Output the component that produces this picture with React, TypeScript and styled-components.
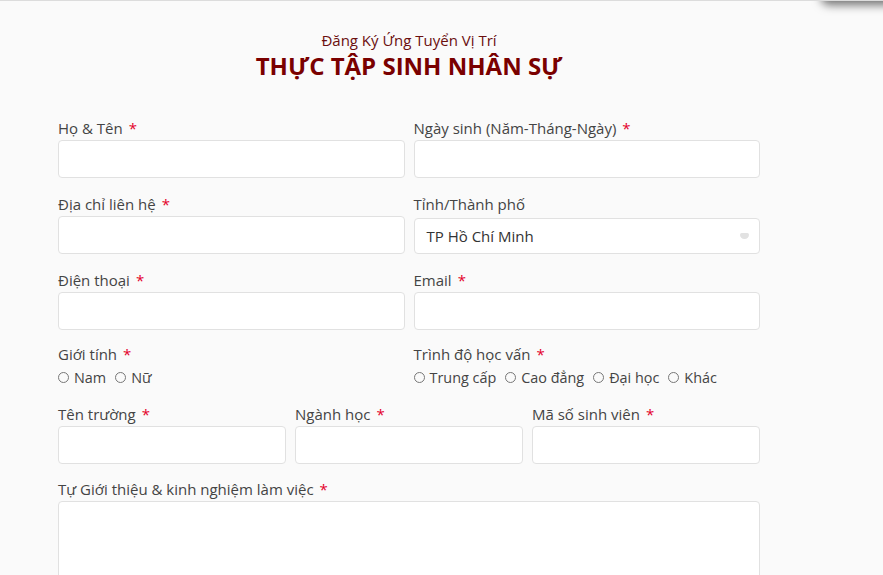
import React from 'react';
import styled, { createGlobalStyle } from 'styled-components';

const GlobalStyle = createGlobalStyle`
  html, body {
    margin: 0;
    padding: 0;
    background: #fafafa;
  }
  body {
    font-family: 'Open Sans', 'Noto Sans', sans-serif;
    color: #444;
    border-top: 1px solid #dcdcdc;
  }
`;

const Page = styled.div`
  position: relative;
  min-height: 574px;
  overflow: hidden;
`;

const CornerShadow = styled.div`
  position: absolute;
  top: -24px;
  right: -20px;
  width: 80px;
  height: 24px;
  border-radius: 6px;
  box-shadow: 0 2px 10px 2px rgba(0, 0, 0, 0.55);
`;

const Form = styled.form`
  width: 702px;
  margin-left: 58px;
  padding-top: 29px;
`;

const Header = styled.div`
  text-align: center;
  margin-bottom: 36px;
`;

const SubTitle = styled.div`
  font-size: 15px;
  line-height: 20px;
  color: #6b0f0f;
`;

const Title = styled.h1`
  margin: 0;
  font-size: 24px;
  line-height: 32px;
  font-weight: 700;
  color: #7a0000;
`;

const Row = styled.div<{ $cols: number; $space?: number }>`
  display: grid;
  grid-template-columns: repeat(${p => p.$cols}, 1fr);
  column-gap: 9px;
  margin-bottom: ${p => p.$space ?? 16}px;
`;

const Field = styled.div`
  display: flex;
  flex-direction: column;
`;

const Label = styled.label`
  font-size: 15px;
  line-height: 21px;
  color: #444;
  margin-bottom: 1px;
`;

const Required = styled.span`
  color: #e4002b;
  margin-left: 6px;
`;

const Input = styled.input`
  box-sizing: border-box;
  height: 38px;
  width: 100%;
  background: #fff;
  border: 1px solid #e1e1e1;
  border-radius: 4px;
  outline: none;
  font: inherit;
`;

const SelectBox = styled.div`
  box-sizing: border-box;
  height: 36px;
  margin-top: 2px;
  display: flex;
  align-items: center;
  justify-content: space-between;
  padding: 0 10px 0 12px;
  background: #fff;
  border: 1px solid #e1e1e1;
  border-radius: 4px;
  font-size: 15px;
  color: #333;
`;

const Caret = styled.span`
  width: 9px;
  height: 6px;
  background: #e2e2e2;
  border-radius: 2px 2px 5px 5px;
`;

const RadioGroup = styled.div`
  display: flex;
  align-items: center;
  gap: 9px;
  height: 22px;
  font-size: 14.4px;
  color: #444;
`;

const Option = styled.span`
  display: flex;
  align-items: center;
  gap: 5px;
`;

const Circle = styled.span`
  box-sizing: border-box;
  width: 11px;
  height: 11px;
  border: 1px solid #777;
  border-radius: 50%;
`;

const TextArea = styled.textarea`
  box-sizing: border-box;
  width: 100%;
  height: 120px;
  background: #fff;
  border: 1px solid #e1e1e1;
  border-radius: 4px;
  resize: none;
  outline: none;
`;

const FieldLabel: React.FC<{ text: string; required?: boolean }> = ({ text, required }) => (
  <Label>
    {text}
    {required && <Required>*</Required>}
  </Label>
);

const Radios: React.FC<{ items: string[] }> = ({ items }) => (
  <RadioGroup>
    {items.map(item => (
      <Option key={item}>
        <Circle />
        {item}
      </Option>
    ))}
  </RadioGroup>
);

const App: React.FC = () => {
  return (
    <Page>
      <GlobalStyle />
      <CornerShadow />
      <Form>
        <Header>
          <SubTitle>Đăng Ký Ứng Tuyển Vị Trí</SubTitle>
          <Title>THỰC TẬP SINH NHÂN SỰ</Title>
        </Header>

        <Row $cols={2}>
          <Field>
            <FieldLabel text="Họ & Tên" required />
            <Input />
          </Field>
          <Field>
            <FieldLabel text="Ngày sinh (Năm-Tháng-Ngày)" required />
            <Input />
          </Field>
        </Row>

        <Row $cols={2}>
          <Field>
            <FieldLabel text="Địa chỉ liên hệ" required />
            <Input />
          </Field>
          <Field>
            <FieldLabel text="Tỉnh/Thành phố" />
            <SelectBox>
              TP Hồ Chí Minh
              <Caret />
            </SelectBox>
          </Field>
        </Row>

        <Row $cols={2} $space={14}>
          <Field>
            <FieldLabel text="Điện thoại" required />
            <Input />
          </Field>
          <Field>
            <FieldLabel text="Email" required />
            <Input />
          </Field>
        </Row>

        <Row $cols={2}>
          <Field>
            <FieldLabel text="Giới tính" required />
            <Radios items={['Nam', 'Nữ']} />
          </Field>
          <Field>
            <FieldLabel text="Trình độ học vấn" required />
            <Radios items={['Trung cấp', 'Cao đẳng', 'Đại học', 'Khác']} />
          </Field>
        </Row>

        <Row $cols={3} $space={15}>
          <Field>
            <FieldLabel text="Tên trường" required />
            <Input />
          </Field>
          <Field>
            <FieldLabel text="Ngành học" required />
            <Input />
          </Field>
          <Field>
            <FieldLabel text="Mã số sinh viên" required />
            <Input />
          </Field>
        </Row>

        <Field>
          <FieldLabel text="Tự Giới thiệu & kinh nghiệm làm việc" required />
          <TextArea />
        </Field>
      </Form>
    </Page>
  );
};

export default App;
